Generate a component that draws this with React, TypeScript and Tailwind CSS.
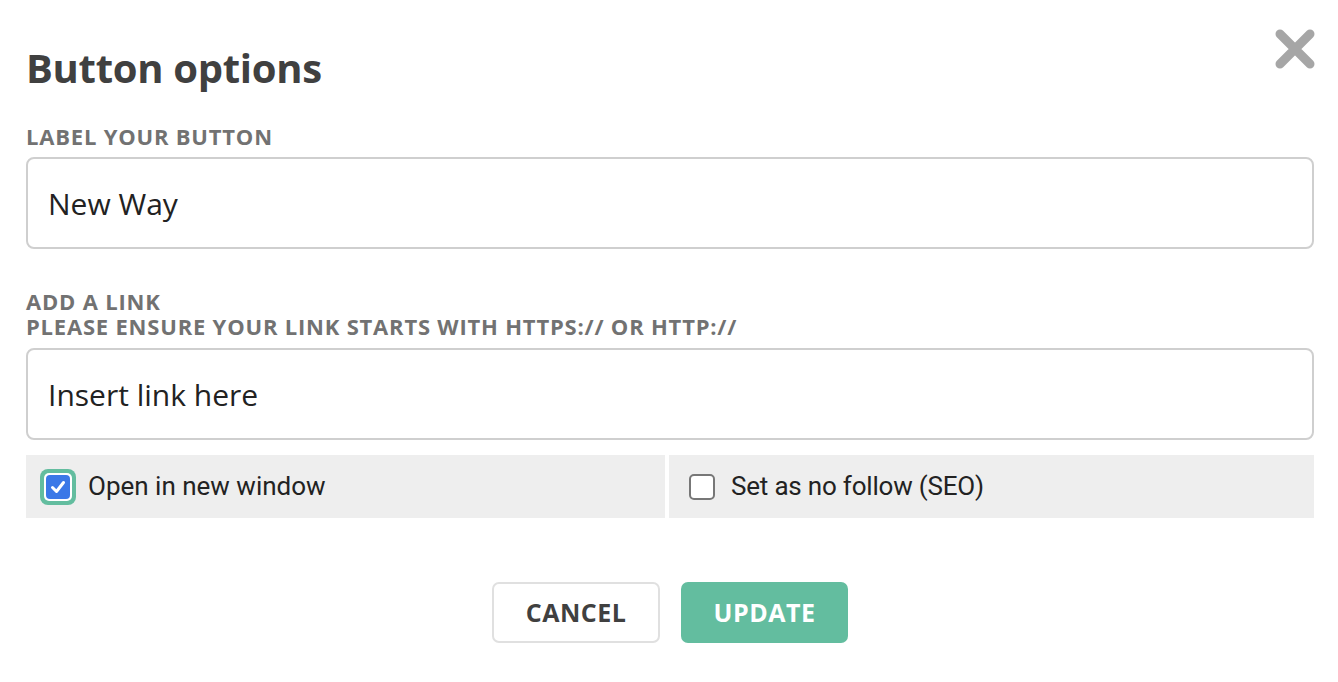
import { useState } from "react"

function CloseIcon() {
  return (
    <svg width="42" height="42" viewBox="0 0 42 42" fill="none">
      <path d="M6 6 L36 36 M36 6 L6 36" stroke="#a6a6a6" strokeWidth="9" strokeLinecap="round" />
    </svg>
  )
}

function CheckBox({ checked, focused }: { checked: boolean; focused?: boolean }) {
  if (checked) {
    return (
      <span className={`flex items-center justify-center w-[36px] h-[36px] rounded-[8px] ${focused ? "bg-[#63bd9f]" : ""}`}>
        <span className="flex items-center justify-center w-[28px] h-[28px] rounded-[5px] bg-white">
          <span className="flex items-center justify-center w-[24px] h-[24px] rounded-[4px] bg-[#3b78e7]">
            <svg width="16" height="16" viewBox="0 0 16 16">
              <path d="M2.5 8.5 L6.5 12.5 L13.5 3.5" stroke="white" strokeWidth="3" fill="none" strokeLinecap="round" strokeLinejoin="round" />
            </svg>
          </span>
        </span>
      </span>
    )
  }
  return <span className="block w-[26px] h-[26px] rounded-[5px] border-2 border-[#777] bg-white" />
}

export default function App() {
  const [label] = useState("New Way")

  return (
    <div className="w-[1338px] h-[682px] bg-white relative font-['Open_Sans',sans-serif] text-[#444]">
      <button className="absolute right-[22px] top-[28px]">
        <CloseIcon />
      </button>

      <div className="pl-[26px] pr-[24px] pt-[44px]">
        <h1 className="text-[40px] font-bold leading-[48px] text-[#404040] tracking-[-0.3px]">Button options</h1>

        <div className="mt-[32px] text-[22px] font-bold leading-[24px] text-[#727272] tracking-[0.8px]">LABEL YOUR BUTTON</div>
        <div className="mt-[9px] h-[92px] border-2 border-[#cfcfcf] rounded-[8px] flex items-center px-[20px] text-[30px] text-[#222]">
          {label}
        </div>

        <div className="mt-[40px] text-[22px] font-bold leading-[25px] text-[#727272] tracking-[0.8px]">
          <div>ADD A LINK</div>
          <div>PLEASE ENSURE YOUR LINK STARTS WITH HTTPS:// OR HTTP://</div>
        </div>
        <div className="mt-[9px] h-[92px] border-2 border-[#cfcfcf] rounded-[8px] flex items-center px-[20px] text-[30px] text-[#222]">
          Insert link here
        </div>

        <div className="mt-[15px] flex gap-[4px] h-[63px] text-[26px] text-[#222] font-['Roboto',sans-serif]">
          <label className="flex-1 bg-[#eeeeee] flex items-center pl-[14px] gap-[12px]">
            <CheckBox checked focused />
            Open in new window
          </label>
          <label className="flex-1 bg-[#eeeeee] flex items-center pl-[20px] gap-[16px]">
            <CheckBox checked={false} />
            <span className="tracking-[-0.2px]">Set as no follow (SEO)</span>
          </label>
        </div>

        <div className="mt-[64px] flex justify-center gap-[21px]">
          <button className="w-[168px] h-[61px] border-2 border-[#e0e0e0] rounded-[7px] text-[25px] font-bold text-[#404040] tracking-[0.5px]">
            CANCEL
          </button>
          <button className="w-[167px] h-[61px] bg-[#63bd9f] rounded-[7px] text-[25px] font-bold text-white tracking-[0.5px]">
            UPDATE
          </button>
        </div>
      </div>
    </div>
  )
}
